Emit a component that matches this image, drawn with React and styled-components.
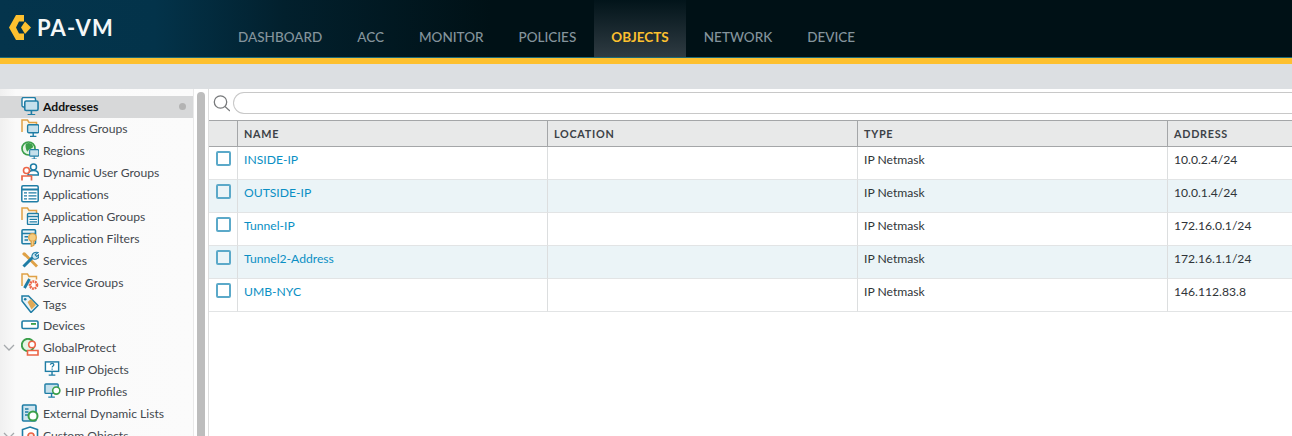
import React from "react";
import styled, { createGlobalStyle } from "styled-components";

const Global = createGlobalStyle`
  html, body { margin: 0; padding: 0; height: 436px; overflow: hidden; background: #fff; }
  body { font-family: Lato, "Liberation Sans", sans-serif; }
  * { box-sizing: border-box; }
`;
const Page = styled.div`width: 1292px; height: 436px; overflow: hidden; display: flex; flex-direction: column;`;
const Header = styled.header`
  height: 58px; flex: none; display: flex; align-items: flex-end;
  background: linear-gradient(90deg, #04344c 0%, #03334a 12%, #02202d 22%, #001116 38%, #001116 100%);
  border-bottom: 1px solid #1d6a78;
`;
const Brand = styled.div`width: 220.5px; height: 57px; flex: none; display: flex; align-items: flex-start; padding: 15px 0 0 9px; gap: 6px;`;
const BrandName = styled.span`font-size: 22px; font-weight: 700; color: #f4f7f8; line-height: 26px; letter-spacing: 1.1px;`;
const Nav = styled.nav`display: flex; height: 57px;`;
const NavItem = styled.a`
  display: flex; align-items: center; padding: 17px 17.5px 0; font-size: 13.5px; line-height: 17px;
  color: ${p => p.$active ? "#fdc02f" : "#84949c"}; font-weight: ${p => p.$active ? 700 : 500};
  background: ${p => p.$active ? "linear-gradient(180deg, #02141a 0%, #2f3b42 100%)" : "transparent"};
`;
const Accent = styled.div`height: 6px; flex: none; background: #fdc02f;`;
const Toolbar = styled.div`height: 25px; flex: none; background: #dcdfe2;`;
const Main = styled.div`flex: 1; min-height: 0; display: flex; overflow: hidden;`;
const Sidebar = styled.aside`
  width: 194px; flex: none; padding-top: 7px; overflow: hidden; border-right: 1px solid #e9e9e9;
  background: linear-gradient(90deg, #f0f0f0 0, #fafafa 16px, #fbfbfb 100%);
`;
const Row = styled.div`
  height: ${p => p.$short ? 21 : 22}px; display: flex; align-items: center; position: relative; padding-bottom: 2px;
  padding-left: ${p => p.$nested ? 44 : 21}px; gap: ${p => p.$nested ? 4 : 4}px;
  font-size: 12.15px; white-space: nowrap; color: ${p => p.$selected ? "#111" : "#43484e"};
  font-weight: ${p => p.$selected ? 700 : 400};
  background: ${p => p.$selected ? "#d7d8d9" : "transparent"};
  & > svg:first-of-type { flex: none; }
`;
const Dot = styled.span`position: absolute; right: 7px; top: 7px; width: 7px; height: 7px; border-radius: 50%; background: #b3b3b3;`;
const Chevron = styled.svg`position: absolute; left: 3px; top: 7px;`;
const Track = styled.div`width: 15px; flex: none; padding: 3px 3px 0 3px; background: #fff; border-right: 1px solid #dedede;`;
const Thumb = styled.div`width: 8px; height: 100%; border-radius: 4px 4px 0 0; background: #bdbdbd;`;
const Content = styled.section`flex: 1; min-width: 0; display: flex; flex-direction: column; padding-top: 3px; overflow: hidden;`;
const SearchBar = styled.div`height: 28px; flex: none; display: flex; align-items: flex-start; padding-left: 4px; gap: 3px;`;
const SearchInput = styled.div`flex: none; width: 1080px; height: 22px; border: 1px solid #c8c8c8; border-right: 0; border-radius: 11px 0 0 11px; background: #fff;`;
const Grid = styled.div`display: grid; grid-template-columns: 29px 310px 310px 310px 124px;`;
const Head = styled.div`
  height: 27px; display: flex; align-items: center; padding: 0 0 1px 6px; background: #e8e9e9;
  border-top: 1px solid #a4a6a8; border-bottom: 1px solid #a4a6a8; border-right: ${p => p.$last ? 0 : "1px solid #a4a6a8"};
  font-size: 10.8px; font-weight: 700; letter-spacing: 0.72px; color: #3c4247;
`;
const Cell = styled.div`
  height: 33px; display: flex; align-items: flex-start; padding: 5px 0 0 6px; font-size: 12.15px; line-height: 15px;
  color: ${p => p.$link ? "#0a8fc4" : "#2f3438"}; background: ${p => p.$alt ? "#ebf4f7" : "#fff"};
  border-bottom: 1px solid #e2e4e5; border-right: ${p => p.$last ? 0 : "1px solid #dcdedf"};
`;
const Check = styled.span`display: block; width: 15px; height: 15px; margin: -1px 0 0 1px; border: 2px solid #5ba9c9; border-radius: 2px; background: ${p => p.$alt ? "#ebf4f7" : "#fff"};`;

const B = "#1f7da5", O = "#dfa146", R = "#ec6547", G = "#3b9f4a";
const Ic = ({ children, w = 18 }) => <svg width={w} height="18" viewBox="0 0 18 18" fill="none">{children}</svg>;
const Mon = ({ x = 0, y = 0, s = 1, c = B }) => (
  <g transform={`translate(${x} ${y}) scale(${s})`} stroke={c} strokeWidth={1.7} fill="#fff">
    <rect x="1" y="1" width="14" height="10" rx="1.500" fill="#c5e0ec" /><path d="M8 11v4M4 15.500h8" />
  </g>
);
const Folder = () => <path d="M1 13V1h5.500l1.500 2.500h7.500v3" stroke={O} strokeWidth="1.500" fill="#fdf6e8" />;
const icons = {
  addr: <Ic><rect x="1" y="0.500" width="13.500" height="9.500" rx="1.500" stroke={B} strokeWidth="1.400" fill="#fff" /><Mon x="2.800" y="3" s="0.95" /></Ic>,
  groups: <Ic><Folder /><Mon x="5.800" y="5" s="0.8" /></Ic>,
  regions: <Ic><circle cx="7.500" cy="7.500" r="6.500" fill="#e4f4e4" stroke={G} strokeWidth="1.700" /><path d="M5 2.500c3.500-1.500 7 .5 7 3s-4 2-5 4.500-3.500-5-2-7.500z" fill={G} /><Mon x="8" y="8" s="0.65" /></Ic>,
  dug: <Ic><circle cx="12.500" cy="4" r="3" stroke={B} strokeWidth="1.500" fill="#fff" /><path d="M7 12c0-3 2.500-4.500 5.500-4.500s5 1.500 5 4.500z" stroke={B} strokeWidth="1.500" fill="#fff" /><circle cx="5.500" cy="7.500" r="3" stroke={R} strokeWidth="1.600" fill="#fff" /><path d="M1 17.500v-4.500h9.500v4.500" stroke={R} strokeWidth="1.700" fill="#fff" /></Ic>,
  apps: <Ic><rect x="0.800" y="0.800" width="16.400" height="16" rx="1.200" stroke={B} strokeWidth="1.500" fill="#fff" /><path d="M1 4.500h16" stroke={B} strokeWidth="2" /><path d="M3 7.800h3M7.500 7.800h8M3 10.800h3M7.500 10.800h8M3 13.800h3M7.500 13.800h8" stroke={B} strokeWidth="1.300" /></Ic>,
  appGroups: <Ic><Folder /><rect x="6.500" y="6.500" width="11" height="11" rx="1" fill="#fff" stroke={B} strokeWidth="1.400" /><path d="M6.500 9.500h11M8.500 12.300h7.500M8.500 14.800h7.500" stroke={B} strokeWidth="1.300" /></Ic>,
  appFilters: <Ic><rect x="1" y="0.800" width="13.500" height="14" rx="1" fill="#e7f2f7" stroke={B} strokeWidth="1.600" /><path d="M1 4.500h13.500M3.500 7.800h3.500M3.500 11h3.500" stroke={B} strokeWidth="1.600" /><circle cx="11.500" cy="8.500" r="3.800" fill="#f5cc7f" stroke={O} strokeWidth="1.300" /><path d="M10.200 12v5.500l2.600-1.200V12" fill="#f5cc7f" stroke={O} strokeWidth="1.200" /></Ic>,
  services: <Ic><path d="M3 2.500l13 13" stroke={O} strokeWidth="2.800" /><path d="M1 3l2-2 2.500 2.500-2 2z" fill={O} /><path d="M2.500 15.500l9-9" stroke={B} strokeWidth="3" /><path d="M11 6c-.5-3.500 3-5.500 6-4.500l-2.800 2.300 1.500 1.700 2.300-2c.5 3.500-2.500 5.500-5.500 4.500z" fill="#cfe7f2" stroke={B} strokeWidth="1.100" /></Ic>,
  serviceGroups: <Ic><Folder /><path d="M3.500 15l5-9" stroke={B} strokeWidth="2.800" /><circle cx="12.500" cy="12" r="3.500" fill="#fff" stroke={R} strokeWidth="2.600" strokeDasharray="1.800 .7" /></Ic>,
  tags: <Ic><path d="M1 6V1h6.500L17 10.500 10 17.500z" fill="#e9f3f7" stroke={B} strokeWidth="1.500" /><path d="M6.500 7l3.500-3 5 6-4.500 4.500z" fill="#dfa957" /><circle cx="4.200" cy="4.200" r="1.300" fill={B} /></Ic>,
  devices: <Ic><rect x="1" y="4" width="16" height="7.500" rx="1.200" fill="#fff" stroke={B} strokeWidth="1.600" /><rect x="10" y="6" width="5" height="1.800" fill={G} /></Ic>,
  gp: <Ic><circle cx="7" cy="7" r="6.200" fill="#e4f4e4" stroke={G} strokeWidth="1.900" /><circle cx="11" cy="6.500" r="3.300" fill="#fff" stroke={R} strokeWidth="1.600" /><path d="M6.500 17v-4.500h10.500V17z" fill="#fff" stroke={R} strokeWidth="1.600" /></Ic>,
  hipObj: <Ic w={17}><rect x="1.500" y="1.500" width="14" height="10" fill="#fff" stroke={B} strokeWidth="1.500" /><path d="M8.500 11.500v3.500M5 15.500h7" stroke={B} strokeWidth="1.500" /><path d="M6.800 4.500c0-2 3.600-2 3.600 0 0 1.500-1.800 1.300-1.800 3M8.600 8.500v1.300" stroke={B} strokeWidth="1.300" /></Ic>,
  hipProf: <Ic w={17}><rect x="1" y="1.500" width="14" height="10" rx="1" fill="#c5e0ec" stroke={B} strokeWidth="1.500" /><path d="M8 11.500v3.500M4.500 15.500h7" stroke={B} strokeWidth="1.500" /><circle cx="13" cy="8.500" r="3.800" fill="#fff" stroke={G} strokeWidth="1.700" /></Ic>,
  edl: <Ic><rect x="1.500" y="1" width="13.500" height="16" rx="1" fill="#cfe5ef" stroke={B} strokeWidth="1.600" /><path d="M4 5h3.500M4 8h3.500M4 11h3" stroke={B} strokeWidth="1.400" /><circle cx="12" cy="12" r="4.500" fill="#fff" stroke={G} strokeWidth="2" /></Ic>,
  custom: <Ic><path d="M9 1l7.500 2.500v10h-15v-10z" fill="#fff" stroke={B} strokeWidth="1.600" /><circle cx="10" cy="10" r="3" fill="#fbe0d8" stroke={R} strokeWidth="1.700" /></Ic>,
};

const navItems = ["DASHBOARD", "ACC", "MONITOR", "POLICIES", "OBJECTS", "NETWORK", "DEVICE"];
const tree = [
  { label: "Addresses", icon: "addr", selected: true },
  { label: "Address Groups", icon: "groups" },
  { label: "Regions", icon: "regions" },
  { label: "Dynamic User Groups", icon: "dug" },
  { label: "Applications", icon: "apps" },
  { label: "Application Groups", icon: "appGroups" },
  { label: "Application Filters", icon: "appFilters" },
  { label: "Services", icon: "services" },
  { label: "Service Groups", icon: "serviceGroups" },
  { label: "Tags", icon: "tags" },
  { label: "Devices", icon: "devices", short: true },
  { label: "GlobalProtect", icon: "gp", open: true },
  { label: "HIP Objects", icon: "hipObj", nested: true },
  { label: "HIP Profiles", icon: "hipProf", nested: true },
  { label: "External Dynamic Lists", icon: "edl" },
  { label: "Custom Objects", icon: "custom", open: true },
];
const rows = [
  ["INSIDE-IP", "10.0.2.4/24"],
  ["OUTSIDE-IP", "10.0.1.4/24"],
  ["Tunnel-IP", "172.16.0.1/24"],
  ["Tunnel2-Address", "172.16.1.1/24"],
  ["UMB-NYC", "146.112.83.8"],
];

export default function App() {
  return (
    <Page>
      <Global />
      <Header>
        <Brand>
          <svg width="22" height="25" viewBox="0 0 22 25" style={{ flex: "none" }}>
            <path d="M7 0h8v6.500H10L7 12.500 10 18.500h5V25H7L0 12.500z" fill="#fdc02f" />
            <path d="M16 6.500L22 12.500 16 19l-4-6.500z" fill="#fdc02f" />
          </svg>
          <BrandName>PA-VM</BrandName>
        </Brand>
        <Nav>
          {navItems.map(n => <NavItem key={n} $active={n === "OBJECTS"}>{n}</NavItem>)}
        </Nav>
      </Header>
      <Accent />
      <Toolbar />
      <Main>
        <Sidebar>
          {tree.map(t => (
            <Row key={t.label} $selected={t.selected} $nested={t.nested} $short={t.short}>
              {t.open && <Chevron width="12" height="7" viewBox="0 0 12 7" fill="none"><path d="M1 1l5 5 5-5" stroke="#a5a9ac" strokeWidth="1.300" /></Chevron>}
              {icons[t.icon]}
              {t.label}
              {t.selected && <Dot />}
            </Row>
          ))}
        </Sidebar>
        <Track><Thumb /></Track>
        <Content>
          <SearchBar>
            <svg width="17" height="20" viewBox="0 0 17 20" fill="none" style={{ flex: "none", marginTop: 2 }}>
              <circle cx="7.500" cy="8" r="6.200" stroke="#77797b" strokeWidth="1.300" />
              <path d="M12 12.500l5 4.500" stroke="#77797b" strokeWidth="1.300" />
            </svg>
            <SearchInput />
          </SearchBar>
          <Grid>
            <Head />
            <Head>NAME</Head>
            <Head>LOCATION</Head>
            <Head>TYPE</Head>
            <Head $last>ADDRESS</Head>
            {rows.map(([name, addr], i) => {
              const alt = i % 2 === 1;
              return (
                <React.Fragment key={name}>
                  <Cell $alt={alt}><Check $alt={alt} /></Cell>
                  <Cell $alt={alt} $link>{name}</Cell>
                  <Cell $alt={alt} />
                  <Cell $alt={alt}>IP Netmask</Cell>
                  <Cell $alt={alt} $last>{addr}</Cell>
                </React.Fragment>
              );
            })}
          </Grid>
        </Content>
      </Main>
    </Page>
  );
}
